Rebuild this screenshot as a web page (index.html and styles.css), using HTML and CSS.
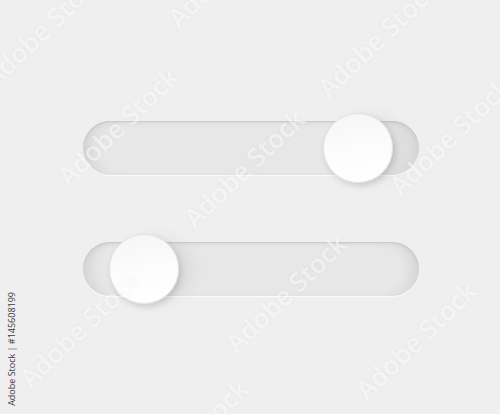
FILE: index.html
```html
<!DOCTYPE html>
<html lang="en">
<head>
  <meta charset="UTF-8">
  <meta name="viewport" content="width=device-width, initial-scale=1.0">
  <title>Sliders</title>
  <link rel="stylesheet" href="styles.css">
</head>
<body>
  <main class="stage">
    <div class="track">
      <div class="knob" style="margin-left: 240px;"></div>
    </div>
    <div class="track">
      <div class="knob" style="margin-left: 26px;"></div>
    </div>

    <!-- stock watermarks -->
    <span class="mark" style="left: 40px; top: 108px;">Adobe Stock</span>
    <span class="mark" style="left: 166px; top: 150px;">Adobe Stock</span>
    <span class="mark" style="left: 372px; top: 118px;">Adobe Stock</span>
    <span class="mark" style="left: 208px; top: 275px;">Adobe Stock</span>
    <span class="mark" style="left: 2px; top: 310px;">Adobe Stock</span>
    <span class="mark" style="left: 338px; top: 322px;">Adobe Stock</span>
    <span class="mark" style="left: -34px; top: 10px;">Adobe Stock</span>
    <span class="mark" style="left: 300px; top: 20px;">Adobe Stock</span>
    <span class="mark" style="left: 150px; top: -50px;">Adobe Stock</span>
    <span class="mark" style="left: 110px; top: 420px;">Adobe Stock</span>

    <p class="credit">Adobe Stock | #145608199</p>
  </main>
</body>
</html>
```

FILE: styles.css
```css
* {
  margin: 0;
  padding: 0;
  box-sizing: border-box;
}

body {
  background-color: #efefef;
  font-family: "Open Sans", "Liberation Sans", sans-serif;
}

.stage {
  position: relative;
  width: 500px;
  height: 414px;
  overflow: hidden;
  display: flex;
  flex-direction: column;
  gap: 67px;
  padding: 121px 0 0 83px;
}

.track {
  width: 336px;
  height: 54px;
  border-radius: 27px;
  background-color: #e7e7e7;
  display: flex;
  align-items: center;
  box-shadow:
    inset 0 1px 1px rgba(0, 0, 0, 0.08),
    inset 0 4px 6px -2px rgba(0, 0, 0, 0.05),
    inset 14px 0 14px -8px rgba(0, 0, 0, 0.09),
    inset -14px 0 14px -8px rgba(0, 0, 0, 0.09),
    0 1px 0 rgba(255, 255, 255, 0.7);
}

.knob {
  flex: none;
  width: 70px;
  height: 70px;
  border-radius: 50%;
  background: linear-gradient(170deg, #f5f5f5 0%, #fcfcfc 50%, #ffffff 100%);
  border: 1px solid #e4e4e4;
  box-shadow:
    2px 3px 6px rgba(0, 0, 0, 0.14),
    16px 0 18px -4px rgba(0, 0, 0, 0.06);
  position: relative;
  z-index: 1;
}

.mark {
  position: absolute;
  z-index: 2;
  font-size: 26px;
  font-weight: 600;
  white-space: nowrap;
  color: rgba(255, 255, 255, 0.5);
  text-shadow: 0 0 4px rgba(0, 0, 0, 0.04);
  transform: rotate(-44deg);
  transform-origin: center;
}

.credit {
  position: absolute;
  z-index: 3;
  left: 7px;
  bottom: 8px;
  writing-mode: vertical-rl;
  transform: rotate(180deg);
  font-size: 9px;
  line-height: 9px;
  color: #3a3a3a;
  white-space: nowrap;
}
```
